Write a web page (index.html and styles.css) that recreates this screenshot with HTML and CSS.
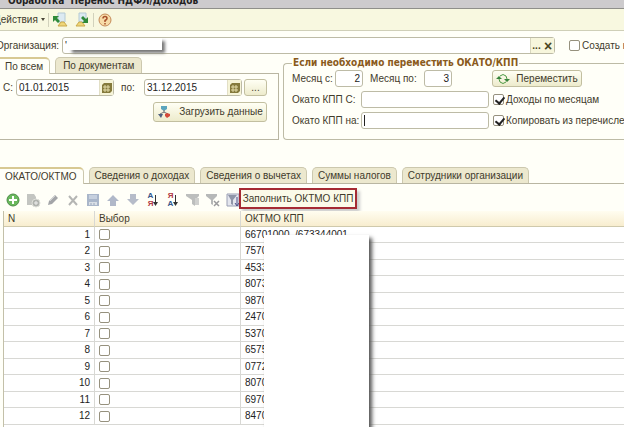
FILE: index.html
```
<!DOCTYPE html>
<html lang="ru">
  <head>
    <meta charset="utf-8">
    <title>Обработка Перенос НДФЛ/Доходов</title>
    <link rel="stylesheet" href="styles.css">
  </head>
  <body>
    <header class="titlebar"><span>Обработка&nbsp; Перенос НДФЛ/Доходов</span></header>

    <nav class="toolbar">
      <button class="menu">Действия <i class="caret"></i></button>
      <i class="sep"></i>
      <button class="icon" aria-label="Восстановить">
        <svg width="16" height="16" viewBox="0 0 16 16"><path d="M6 1h7v9H6z" fill="#dceaf2" stroke="#b4cad4"/><path d="M6 14l3-4h3l3 4z" fill="#efd678" stroke="#c9a94a"/><path d="M1 4h6L5 6l3 3-2 2-3-3-2 2z" fill="#2f8a3a"/></svg>
      </button>
      <button class="icon" aria-label="Сохранить">
        <svg width="16" height="16" viewBox="0 0 16 16"><path d="M5 1h7v9H5z" fill="#dceaf2" stroke="#b4cad4"/><path d="M2 14l3-4h3l3 4z" fill="#efd678" stroke="#c9a94a"/><path d="M14 11H8l2-2-3-3 2-2 3 3 2-2z" fill="#2f8a3a"/></svg>
      </button>
      <i class="sep"></i>
      <button class="icon" aria-label="Справка">
        <svg width="16" height="16" viewBox="0 0 16 16"><circle cx="8" cy="8" r="6" fill="#f7dca8" stroke="#c48a58"/><path d="M6 6.500q0-2 2-2t2 2q0 1-2 2v1.500M8 11v1.500" fill="none" stroke="#a6502a" stroke-width="1.500"/></svg>
      </button>
    </nav>

    <div class="org">
      <label for="org">Организация:</label>
      <div class="field org-field">
        <input id="org" type="text" value="'">
        <button class="dots">...</button>
        <button class="clear">×</button>
        <div class="mask org-mask"></div>
      </div>
      <label class="check"><input type="checkbox">Создать н</label>
    </div>

    <div class="params">
      <section class="period">
        <div class="tabs">
          <button class="tab active">По всем</button>
          <button class="tab">По документам</button>
        </div>
        <div class="period-body">
          <div class="dates">
            <label for="from">С:</label>
            <div class="field date">
              <input id="from" type="text" value="01.01.2015">
              <button class="calendar" aria-label="Выбрать дату начала"><svg width="10" height="10" viewBox="0 0 10 10"><path d="M2 0h8v8l-2 2H0V2z" fill="#857a3c"/><path d="M1 4h7M1 7h7M3 2v7M6 2v7" stroke="#e4dca8"/></svg></button>
            </div>
            <label for="to" class="to">по:</label>
            <div class="field date">
              <input id="to" type="text" value="31.12.2015">
              <button class="calendar" aria-label="Выбрать дату конца"><svg width="10" height="10" viewBox="0 0 10 10"><path d="M2 0h8v8l-2 2H0V2z" fill="#857a3c"/><path d="M1 4h7M1 7h7M3 2v7M6 2v7" stroke="#e4dca8"/></svg></button>
            </div>
            <button class="btn more">...</button>
          </div>
          <button class="btn load">
            <svg width="14" height="14" viewBox="0 0 14 14"><path d="M4 1h6v3L7 6 4 4z" fill="#5ba5bd"/><path d="M7 5v3M3 9l4-2 4 2" stroke="#777" fill="none"/><path d="M1 9h5l-2 4z" fill="#50617f"/><path d="M8 9l2-1 3 1v2l-3 2-2-2z" fill="#d54a3a"/></svg>
            Загрузить данные
          </button>
        </div>
      </section>

      <fieldset class="move">
        <legend>Если необходимо переместить ОКАТО/КПП</legend>
        <div class="line">
          <label for="m1" class="m1">Месяц с:</label>
          <input id="m1" class="box num" type="text" value="2">
          <label for="m2" class="m2">Месяц по:</label>
          <input id="m2" class="box num" type="text" value="3">
          <button class="btn go">
            <svg width="14" height="12" viewBox="0 0 14 12"><path d="M4 3q3-3 6 0l1 3M3 6l1 3q3 3 6 0" fill="none" stroke="#4d9a45"/><path d="M0 6h6L3 3zM8 6h6l-3 3z" fill="#37843a"/></svg>
            Переместить
          </button>
        </div>
        <div class="line">
          <label for="k1" class="kpp">Окато КПП С:</label>
          <input id="k1" class="box code" type="text">
          <label class="check"><input type="checkbox" checked>Доходы по месяцам</label>
        </div>
        <div class="line">
          <label for="k2" class="kpp">Окато КПП на:</label>
          <div class="box code"><input id="k2" type="text"><i class="cursor"></i></div>
          <label class="check"><input type="checkbox" checked>Копировать из перечислен</label>
        </div>
      </fieldset>
    </div>

    <div class="tabs main-tabs">
      <button class="tab active">ОКАТО/ОКТМО</button>
      <button class="tab">Сведения о доходах</button>
      <button class="tab">Сведения о вычетах</button>
      <button class="tab">Суммы налогов</button>
      <button class="tab">Сотрудники организации</button>
    </div>

    <div class="commands">
      <button class="icon" aria-label="Добавить"><svg width="16" height="16" viewBox="0 0 16 16"><circle cx="8" cy="8" r="6" fill="#69b85c" stroke="#4d8d48"/><path d="M8 4v8M4 8h8" stroke="#fff" stroke-width="2"/></svg></button>
      <button class="icon" aria-label="Скопировать"><svg width="16" height="16" viewBox="0 0 16 16"><path d="M2 2h7l2 3v8H2z" fill="#c3c5c1"/><circle cx="11" cy="11" r="4" fill="#b0b3af" stroke="#dfe0da"/><path d="M11 9v4M9 11h4" stroke="#eee"/></svg></button>
      <button class="icon" aria-label="Изменить"><svg width="16" height="16" viewBox="0 0 16 16"><path d="M3 13l1-4 6-6 3 3-6 6z" fill="#a3a5a8"/><path d="M5 9l5-5" stroke="#d0d2d4"/></svg></button>
      <button class="icon" aria-label="Удалить"><svg width="16" height="16" viewBox="0 0 16 16"><path d="M4 4l8 9M12 4l-8 9" stroke="#b5b6b4" stroke-width="2"/></svg></button>
      <button class="icon" aria-label="Записать"><svg width="16" height="16" viewBox="0 0 16 16"><path d="M2 2h12v12H2z" fill="#a9b6ca"/><path d="M4 3h8v4H4z" fill="#c6d0de"/><path d="M4 10h8v3H4z" fill="#d9dfe6"/><path d="M6 11v2M9 11v2" stroke="#9aa8bc"/></svg></button>
      <button class="icon" aria-label="Вверх"><svg width="16" height="16" viewBox="0 0 16 16"><path d="M8 3l6 6h-3v5H5V9H2z" fill="#b0b8c9"/></svg></button>
      <button class="icon" aria-label="Вниз"><svg width="16" height="16" viewBox="0 0 16 16"><path d="M8 13l6-6h-3V2H5v5H2z" fill="#b6bcc9"/></svg></button>
      <button class="icon" aria-label="По возрастанию"><span class="letters"><b class="blue">А</b><b class="red">Я</b></span><svg width="5" height="12" viewBox="0 0 5 12"><path d="M2.500 1v8" stroke="#333"/><path d="M0 8h5l-2.500 4z" fill="#333"/></svg></button>
      <button class="icon" aria-label="По убыванию"><span class="letters"><b class="red">Я</b><b class="blue">А</b></span><svg width="5" height="12" viewBox="0 0 5 12"><path d="M2.500 1v8" stroke="#333"/><path d="M0 8h5l-2.500 4z" fill="#333"/></svg></button>
      <button class="icon" aria-label="Отбор"><svg width="16" height="16" viewBox="0 0 16 16"><path d="M1 2h13v2l-4 4v6l-3-2V8L1 4z" fill="#bcbebd"/><path d="M10 6h4v7h-4z" fill="#cfd0ce"/></svg></button>
      <button class="icon" aria-label="Отключить отбор"><svg width="16" height="16" viewBox="0 0 16 16"><path d="M1 2h11v2L8 8v5l-2-1V8L1 4z" fill="#b6b8b8"/><path d="M9 9l5 5M14 9l-5 5" stroke="#9b9b9d" stroke-width="1.500"/></svg></button>
      <button class="icon" aria-label="Настройка отбора"><svg width="16" height="16" viewBox="0 0 16 16"><path d="M2 2h12v12H2z" fill="#e4e6ee" stroke="#9a9fb4"/><path d="M3 3h9L8 8v5l-2-1V8z" fill="#8f95a8"/><path d="M12 5v8M10 11l2 3 2-3" fill="none" stroke="#4a4f86"/></svg></button>
      <button class="fill">Заполнить ОКТМО КПП</button>
    </div>

    <div class="grid">
      <table>
        <thead>
          <tr><th class="n">N</th><th class="pick">Выбор</th><th>ОКТМО КПП</th></tr>
        </thead>
        <tbody>
          <tr><td>1</td><td><input type="checkbox" aria-label="Строка 1"></td><td>66701000&nbsp; /673344001</td></tr>
          <tr><td>2</td><td><input type="checkbox" aria-label="Строка 2"></td><td>7570</td></tr>
          <tr><td>3</td><td><input type="checkbox" aria-label="Строка 3"></td><td>4533</td></tr>
          <tr><td>4</td><td><input type="checkbox" aria-label="Строка 4"></td><td>8073</td></tr>
          <tr><td>5</td><td><input type="checkbox" aria-label="Строка 5"></td><td>9870</td></tr>
          <tr><td>6</td><td><input type="checkbox" aria-label="Строка 6"></td><td>2470</td></tr>
          <tr><td>7</td><td><input type="checkbox" aria-label="Строка 7"></td><td>5370</td></tr>
          <tr><td>8</td><td><input type="checkbox" aria-label="Строка 8"></td><td>6575</td></tr>
          <tr><td>9</td><td><input type="checkbox" aria-label="Строка 9"></td><td>0772</td></tr>
          <tr><td>10</td><td><input type="checkbox" aria-label="Строка 10"></td><td>8070</td></tr>
          <tr><td>11</td><td><input type="checkbox" aria-label="Строка 11"></td><td>6970</td></tr>
          <tr><td>12</td><td><input type="checkbox" aria-label="Строка 12"></td><td>8470</td></tr>
        </tbody>
      </table>
      <div class="mask grid-mask"></div>
    </div>
  </body>
</html>
```
FILE: styles.css
```
* { box-sizing: border-box; }
body {
  margin: 0;
  height: 100vh;
  display: flex;
  flex-direction: column;
  overflow: hidden;
  background: #fffff8;
  color: #3f3b2c;
  font-family: "Liberation Sans", Arial, sans-serif;
  font-size: 10px;
  line-height: 14px;
  white-space: nowrap;
}
button, input {
  margin: 0;
  padding: 0;
  border: 0;
  background: none;
  font: inherit;
  color: inherit;
  white-space: nowrap;
}
svg { flex: none; }
input { min-width: 0; color: #222; outline: none; }
body > * { flex: none; }

.titlebar, legend {
  font-family: "DejaVu Sans Condensed", sans-serif;
  font-weight: bold;
}
.titlebar {
  display: flex;
  align-items: flex-end;
  height: 9px;
  padding-left: 8px;
  overflow: hidden;
  background: #cdcbcd;
  border-bottom: 1px solid #8f8f8a;
  color: #222;
}

/* top toolbar */
.toolbar {
  display: flex;
  align-items: center;
  height: 22px;
  background: #f8f8e0;
  border-bottom: 1px solid #cfcfb8;
}
.menu { width: 54px; margin-left: -6px; text-align: left; }
.caret {
  display: inline-block;
  vertical-align: middle;
  border: 2px solid transparent;
  border-top: 3px solid #4a4638;
  border-bottom: 0;
}
.sep { width: 1px; height: 14px; background: #d2d2bc; }
.icon {
  display: flex;
  align-items: center;
  justify-content: center;
  width: 20px;
  height: 18px;
}
.toolbar .icon { width: 22px; }

/* fields */
.field, .box {
  display: flex;
  height: 17px;
  background: #fff;
  border: 1px solid #bdbba6;
  border-radius: 3px;
}
.field input { flex: 1; width: 0; padding-left: 2px; }
.org {
  display: flex;
  align-items: center;
  padding-top: 6px;
}
.org > label:first-child { flex: none; width: 66px; margin-left: -4px; }
.org-field { position: relative; flex: 1; }
.dots, .clear {
  width: 12px;
  background: #f7f6dc;
  color: #4a4420;
  font-weight: bold;
}
.dots { border-left: 1px solid #d8d6be; }
.clear { font-size: 14px; line-height: 12px; }
.mask { position: absolute; background: #fff; }
.org-mask {
  top: 0;
  left: 6px;
  width: 93px;
  height: 12px;
  box-shadow: 3px 3px 3px #777;
}
.check { display: flex; align-items: center; }
.check input { margin-right: 2px; }
.org .check { flex: none; width: 55px; margin-left: 14px; }
input[type="checkbox"] {
  appearance: none;
  flex: none;
  display: block;
  width: 11px;
  height: 11px;
  background: #fff;
  border: 1px solid #96917e;
  border-radius: 2px;
}
input[type="checkbox"]:checked::before {
  content: "";
  display: block;
  width: 4px;
  height: 7px;
  margin-left: 3px;
  border: solid #222;
  border-width: 0 2px 2px 0;
  transform: rotate(40deg);
}
.btn {
  display: flex;
  align-items: center;
  justify-content: center;
  height: 17px;
  background: linear-gradient(#fffff4, #edebcc);
  border: 1px solid #c2bfa0;
  border-radius: 3px;
}

/* tabs */
.tabs {
  display: flex;
  align-items: flex-end;
  gap: 5px;
  border-bottom: 1px solid #b9b6a2;
}
.tab {
  height: 16px;
  padding: 0 5px;
  background: #ece8ce;
  border: 1px solid #ccc8ae;
  border-bottom: 0;
  border-radius: 5px 5px 0 0;
}
.period .tab { padding: 0 7px; }
.tabs .tab.active {
  height: 17px;
  margin-bottom: -1px;
  padding: 0 6px 0 5px;
  background: #fffff8;
  border-left: 0;
  border-top: 2px solid #d8c993;
  border-radius: 0 5px 0 0;
}

.params { display: flex; gap: 4px; padding-top: 2px; }
.period { flex: none; width: 279px; display: flex; flex-direction: column; }
.period .tabs { padding-top: 1px; }
.period-body {
  flex: 1;
  padding: 5px 11px 0 3px;
  border: solid #b9b6a2;
  border-width: 0 1px 1px 0;
}
.dates { display: flex; align-items: center; }
.dates label { width: 13px; }
.dates .to { width: 30px; padding-left: 7px; }
.date { width: 98px; }
.calendar {
  display: flex;
  align-items: center;
  justify-content: center;
  width: 14px;
  background: #f6f4d8;
  border-left: 1px solid #e2dfc6;
}
.more { width: 23px; margin-left: auto; }
.load {
  width: 114px;
  height: 20px;
  margin: 6px 0 0 auto;
  gap: 8px;
}

.move {
  flex: 1;
  min-width: 0;
  margin: 0;
  padding: 0 0 6px 8px;
  border: 1px solid #bdbba6;
  border-right: 0;
  border-radius: 4px 0 0 4px;
}
.move legend {
  padding: 0 1px;
  color: #8a5a1c;
}
.line { display: flex; align-items: center; margin-bottom: 4px; }
.line > * { flex: none; }
.line .check { margin-left: 4px; }
.m1 { width: 43px; }
.num { width: 28px; padding-right: 2px; text-align: right; }
.m2 { width: 61px; padding-left: 7px; }
.go { width: 90px; margin-left: 40px; gap: 6px; }
.kpp { width: 69px; }
.code { position: relative; width: 128px; }
.code input { width: 100%; }
.cursor { position: absolute; left: 2px; top: 2px; width: 1px; height: 11px; background: #222; }

.main-tabs { margin-top: 27px; }

/* table commands */
.commands {
  display: flex;
  align-items: center;
  height: 27px;
  padding: 4px 0 2px 3px;
}
.commands .icon { padding-top: 3px; }
.letters { display: flex; flex-direction: column; }
.letters b { font-size: 8px; line-height: 8px; }
.blue { color: #32558c; }
.red { color: #b03a44; }
.fill {
  width: 118px;
  height: 21px;
  margin-left: -4px;
  background: #fbfae9;
  border: 2px solid #a52a34;
  box-shadow: 3px 3px 3px #ccc;
}

.grid {
  position: relative;
  flex: 1;
  margin-left: 3px;
  background: #fff;
  border-left: 1px solid #c3c0a8;
  overflow: hidden;
}
table {
  width: 100%;
  table-layout: fixed;
  border-collapse: separate;
  border-spacing: 0;
  color: #222;
}
th, td {
  height: 16px;
  padding: 0 4px;
  line-height: 14px;
  text-align: left;
  border-bottom: 1px solid #d8d8d4;
  border-left: 1px solid #d8d8d4;
}
tr:nth-child(even) td { height: 17px; }
th:first-child, td:first-child { border-left: 0; }
th {
  background: linear-gradient(#fffdf0, #f8edcf);
  border-bottom-color: #cfc9ac;
  color: #3f3b2c;
  font-weight: normal;
}
td:first-child { text-align: right; }
.n { width: 90px; }
.pick { width: 146px; }
.grid-mask {
  top: 24px;
  bottom: -10px;
  left: 260px;
  width: 105px;
  box-shadow: 3px 3px 4px #555;
}
```
